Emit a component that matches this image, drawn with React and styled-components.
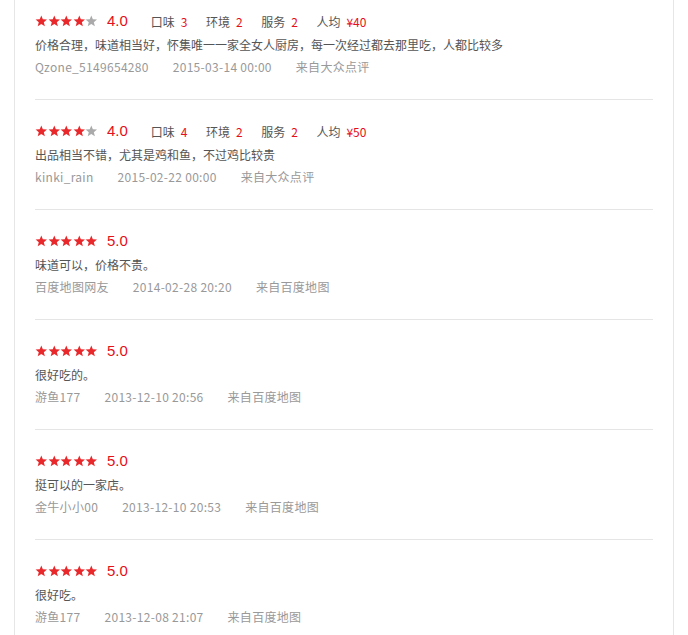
import React from 'react';
import styled, { createGlobalStyle } from 'styled-components';

const GlobalStyle = createGlobalStyle`
    html, body {
        margin: 0;
        padding: 0;
        background: #fff;
    }
    body {
        font-family: "Liberation Sans", "Noto Sans CJK SC", sans-serif;
    }
`;

const Page = styled.div`
    padding: 0 14px;
    width: 688px;
    box-sizing: border-box;
`;

const Panel = styled.div`
    border-left: 1px solid #e6e6e6;
    border-right: 1px solid #e6e6e6;
    background: #fff;
    padding: 0 20px;
    height: 635px;
    overflow: hidden;
`;

const Item = styled.div`
    padding: 18px 0 21px;
    border-bottom: 1px solid #e5e5e5;

    &:first-child {
        padding-top: 8px;
    }
`;

const ScoreRow = styled.div`
    display: flex;
    align-items: center;
    height: 26px;
`;

const Stars = styled.span`
    display: flex;
    align-items: center;
`;

const Score = styled.span`
    margin-left: 9px;
    font-family: "Liberation Sans", sans-serif;
    font-size: 15px;
    color: #e4101a;
    line-height: 26px;
`;

const Details = styled.div`
    display: flex;
    gap: 18.5px;
    margin-left: 23px;
`;

const Detail = styled.span`
    font-size: 12px;
    color: #555;
    font-family: "Noto Sans CJK SC", sans-serif;

    b {
        font-weight: normal;
        color: #e4101a;
        margin-left: 6px;
    }
`;

const Comment = styled.p`
    margin: 0;
    font-family: "Noto Sans CJK SC", sans-serif;
    font-size: 12px;
    line-height: 22px;
    color: #555;
`;

const Meta = styled.div`
    display: flex;
    gap: 24px;
    font-family: "Noto Sans CJK SC", sans-serif;
    font-size: 12px;
    line-height: 22px;
    color: #999;
    letter-spacing: 0.3px;
`;

function Star({ on }) {
    return (
        <svg width="12.6" height="12" viewBox="0 0 13 12">
            <polygon
                points="6.5,0.3 8.1,4.3 12.4,4.5 9.1,7.2 10.2,11.4 6.5,9 2.8,11.4 3.9,7.2 0.6,4.5 4.9,4.3"
                fill={on ? '#e8282b' : '#aaaaaa'}
            />
        </svg>
    );
}

const reviews = [
    { stars: 4, score: '4.0', details: [['口味', 3], ['环境', 2], ['服务', 2], ['人均', '¥40']], text: '价格合理，味道相当好，怀集唯一一家全女人厨房，每一次经过都去那里吃，人都比较多', user: 'Qzone_5149654280', time: '2015-03-14 00:00', from: '来自大众点评' },
    { stars: 4, score: '4.0', details: [['口味', 4], ['环境', 2], ['服务', 2], ['人均', '¥50']], text: '出品相当不错，尤其是鸡和鱼，不过鸡比较贵', user: 'kinki_rain', time: '2015-02-22 00:00', from: '来自大众点评' },
    { stars: 5, score: '5.0', text: '味道可以，价格不贵。', user: '百度地图网友', time: '2014-02-28 20:20', from: '来自百度地图' },
    { stars: 5, score: '5.0', text: '很好吃的。', user: '游鱼177', time: '2013-12-10 20:56', from: '来自百度地图' },
    { stars: 5, score: '5.0', text: '挺可以的一家店。', user: '金牛小小00', time: '2013-12-10 20:53', from: '来自百度地图' },
    { stars: 5, score: '5.0', text: '很好吃。', user: '游鱼177', time: '2013-12-08 21:07', from: '来自百度地图' },
];

export default function App() {
    return (
        <Page>
            <GlobalStyle />
            <Panel>
                {reviews.map((r, i) => (
                    <Item key={i}>
                        <ScoreRow>
                            <Stars>
                                {[0, 1, 2, 3, 4].map(n => <Star key={n} on={n < r.stars} />)}
                            </Stars>
                            <Score>{r.score}</Score>
                            {r.details && (
                                <Details>
                                    {r.details.map(([label, value]) => (
                                        <Detail key={label}>{label}<b>{value}</b></Detail>
                                    ))}
                                </Details>
                            )}
                        </ScoreRow>
                        <Comment>{r.text}</Comment>
                        <Meta>
                            <span>{r.user}</span>
                            <span>{r.time}</span>
                            <span>{r.from}</span>
                        </Meta>
                    </Item>
                ))}
            </Panel>
        </Page>
    );
}
